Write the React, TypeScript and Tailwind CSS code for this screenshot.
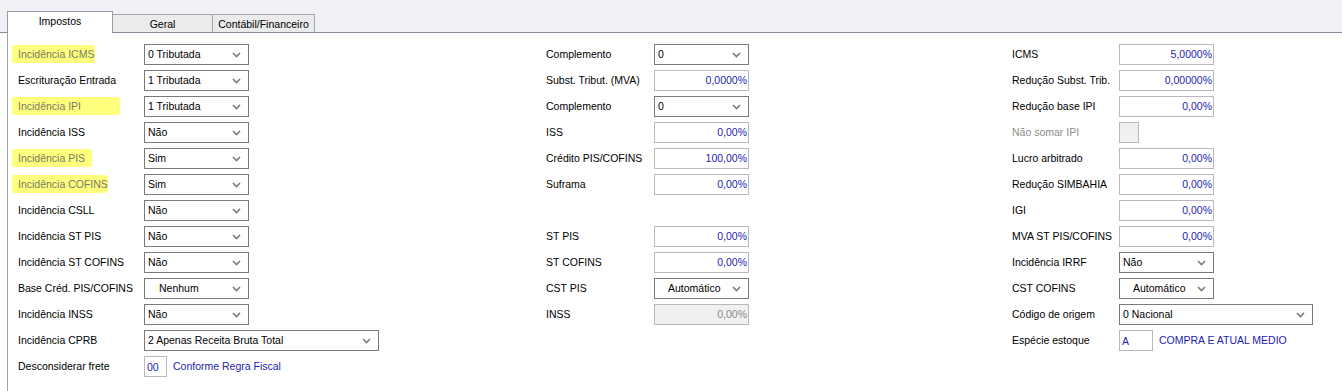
import React from "react";

type Cell =
  | { kind: "select"; text: string; w: number; indent?: number }
  | { kind: "input"; text: string; w: number; disabled?: boolean }
  | { kind: "check" }
  | { kind: "code"; text: string; w: number; note: string }
  | { kind: "none" };

type Row = { label: string; hl?: number; muted?: boolean; cell: Cell };

const col1: Row[] = [
  { label: "Incidência ICMS", hl: 83, cell: { kind: "select", text: "0 Tributada", w: 105 } },
  { label: "Escrituração Entrada", cell: { kind: "select", text: "1 Tributada", w: 105 } },
  { label: "Incidência IPI", hl: 108, cell: { kind: "select", text: "1 Tributada", w: 105 } },
  { label: "Incidência ISS", cell: { kind: "select", text: "Não", w: 105 } },
  { label: "Incidência PIS", hl: 80, cell: { kind: "select", text: "Sim", w: 105 } },
  { label: "Incidência COFINS", hl: 96, cell: { kind: "select", text: "Sim", w: 105 } },
  { label: "Incidência CSLL", cell: { kind: "select", text: "Não", w: 105 } },
  { label: "Incidência ST PIS", cell: { kind: "select", text: "Não", w: 105 } },
  { label: "Incidência ST COFINS", cell: { kind: "select", text: "Não", w: 105 } },
  { label: "Base Créd. PIS/COFINS", cell: { kind: "select", text: "Nenhum", w: 105, indent: 11 } },
  { label: "Incidência INSS", cell: { kind: "select", text: "Não", w: 105 } },
  { label: "Incidência CPRB", cell: { kind: "select", text: "2 Apenas Receita Bruta Total", w: 235 } },
  { label: "Desconsiderar frete", cell: { kind: "code", text: "00", w: 23, note: "Conforme Regra Fiscal" } },
];

const col2: Row[] = [
  { label: "Complemento", cell: { kind: "select", text: "0", w: 95 } },
  { label: "Subst. Tribut. (MVA)", cell: { kind: "input", text: "0,0000%", w: 95 } },
  { label: "Complemento", cell: { kind: "select", text: "0", w: 95 } },
  { label: "ISS", cell: { kind: "input", text: "0,00%", w: 95 } },
  { label: "Crédito PIS/COFINS", cell: { kind: "input", text: "100,00%", w: 95 } },
  { label: "Suframa", cell: { kind: "input", text: "0,00%", w: 95 } },
  { label: "", cell: { kind: "none" } },
  { label: "ST PIS", cell: { kind: "input", text: "0,00%", w: 95 } },
  { label: "ST COFINS", cell: { kind: "input", text: "0,00%", w: 95 } },
  { label: "CST PIS", cell: { kind: "select", text: "Automático", w: 95, indent: 10 } },
  { label: "INSS", cell: { kind: "input", text: "0,00%", w: 95, disabled: true } },
];

const col3: Row[] = [
  { label: "ICMS", cell: { kind: "input", text: "5,0000%", w: 95 } },
  { label: "Redução Subst. Trib.", cell: { kind: "input", text: "0,00000%", w: 95 } },
  { label: "Redução base IPI", cell: { kind: "input", text: "0,00%", w: 95 } },
  { label: "Não somar IPI", muted: true, cell: { kind: "check" } },
  { label: "Lucro arbitrado", cell: { kind: "input", text: "0,00%", w: 95 } },
  { label: "Redução SIMBAHIA", cell: { kind: "input", text: "0,00%", w: 95 } },
  { label: "IGI", cell: { kind: "input", text: "0,00%", w: 95 } },
  { label: "MVA ST PIS/COFINS", cell: { kind: "input", text: "0,00%", w: 95 } },
  { label: "Incidência IRRF", cell: { kind: "select", text: "Não", w: 95 } },
  { label: "CST COFINS", cell: { kind: "select", text: "Automático", w: 95, indent: 10 } },
  { label: "Código de origem", cell: { kind: "select", text: "0 Nacional", w: 194 } },
  { label: "Espécie estoque", cell: { kind: "code", text: "A", w: 34, note: "COMPRA E ATUAL MEDIO" } },
];

function Chevron() {
  return (
    <svg width="9" height="6" viewBox="0 0 9 6" className="shrink-0">
      <polyline points="1,1 4.5,4.5 8,1" fill="none" stroke="#7a7a7a" strokeWidth="1.6" />
    </svg>
  );
}

function Field({ cell }: { cell: Cell }) {
  if (cell.kind === "select") {
    return (
      <div
        className="h-[21px] border border-[#7a7a7a] bg-white flex items-center pr-[7px] pt-[1px] text-black whitespace-nowrap"
        style={{ width: cell.w, paddingLeft: 3 + (cell.indent ?? 0) }}
      >
        <span className="flex-1 truncate">{cell.text}</span>
        <Chevron />
      </div>
    );
  }
  if (cell.kind === "input") {
    return (
      <div
        className={
          "h-[21px] border border-[#b9b9b9] flex items-center justify-end pr-[1px] pt-[1px] " +
          (cell.disabled ? "bg-[#f0f0f0] text-[#8a8a8a]" : "bg-white text-[#2323b0]")
        }
        style={{ width: cell.w }}
      >
        {cell.text}
      </div>
    );
  }
  if (cell.kind === "check") {
    return <div className="h-[21px] w-[20px] border border-[#b9b9b9] bg-[#f0f0f0]" />;
  }
  if (cell.kind === "code") {
    return (
      <div className="flex items-center gap-[6px] whitespace-nowrap">
        <div
          className="h-[21px] border border-[#b9b9b9] bg-white flex items-center pl-[2px] pt-[3px] text-[#2323b0]"
          style={{ width: cell.w }}
        >
          {cell.text}
        </div>
        <span className="text-[#2323b0]">{cell.note}</span>
      </div>
    );
  }
  return null;
}

function Column({ rows, labelW, width }: { rows: Row[]; labelW: number; width?: number }) {
  return (
    <div className="flex flex-col" style={width ? { width } : { flex: 1 }}>
      {rows.map((r, i) => (
        <div key={i} className="h-[26px] flex items-center">
          <div className="shrink-0 flex items-center whitespace-nowrap" style={{ width: labelW }}>
            {r.hl ? (
              <span
                className="-ml-[6px] pl-[6px] h-[18px] flex items-center bg-[#ffff7e] text-[#7a7a6a] rounded-r-[3px] whitespace-nowrap"
                style={{ width: r.hl }}
              >
                {r.label}
              </span>
            ) : (
              <span className={r.muted ? "text-[#8c8c8c]" : "text-black"}>{r.label}</span>
            )}
          </div>
          <Field cell={r.cell} />
        </div>
      ))}
    </div>
  );
}

export default function App() {
  return (
    <div
      className="w-[1342px] h-[391px] bg-white text-[10.5px] leading-none overflow-hidden"
      style={{ fontFamily: '"Liberation Sans", Arial, sans-serif' }}
    >
      <div className="h-[33px] bg-[#f0f1f6] flex items-end pl-[7px] border-b border-[#8a8a98]">
        <div className="relative z-10 -mb-[1px] h-[22px] w-[106px] bg-white border-t border-l border-r border-[#9c9c9c] flex items-start justify-center pt-[4px] text-black">
          Impostos
        </div>
        <div className="h-[18px] w-[100px] bg-[#ebebeb] border-t border-r border-[#a8a8a8] flex items-center justify-center pt-[2px] text-black">
          Geral
        </div>
        <div className="h-[18px] w-[102px] bg-[#ebebeb] border-t border-r border-[#a8a8a8] flex items-center justify-center pt-[2px] text-black">
          Contábil/Financeiro
        </div>
      </div>
      <div className="ml-[7px] h-[358px] border-l border-[#a0a0a0] pt-[8px] pl-[10px] flex">
        <Column rows={col1} labelW={126} width={528} />
        <Column rows={col2} labelW={108} width={466} />
        <Column rows={col3} labelW={107} />
      </div>
    </div>
  );
}
